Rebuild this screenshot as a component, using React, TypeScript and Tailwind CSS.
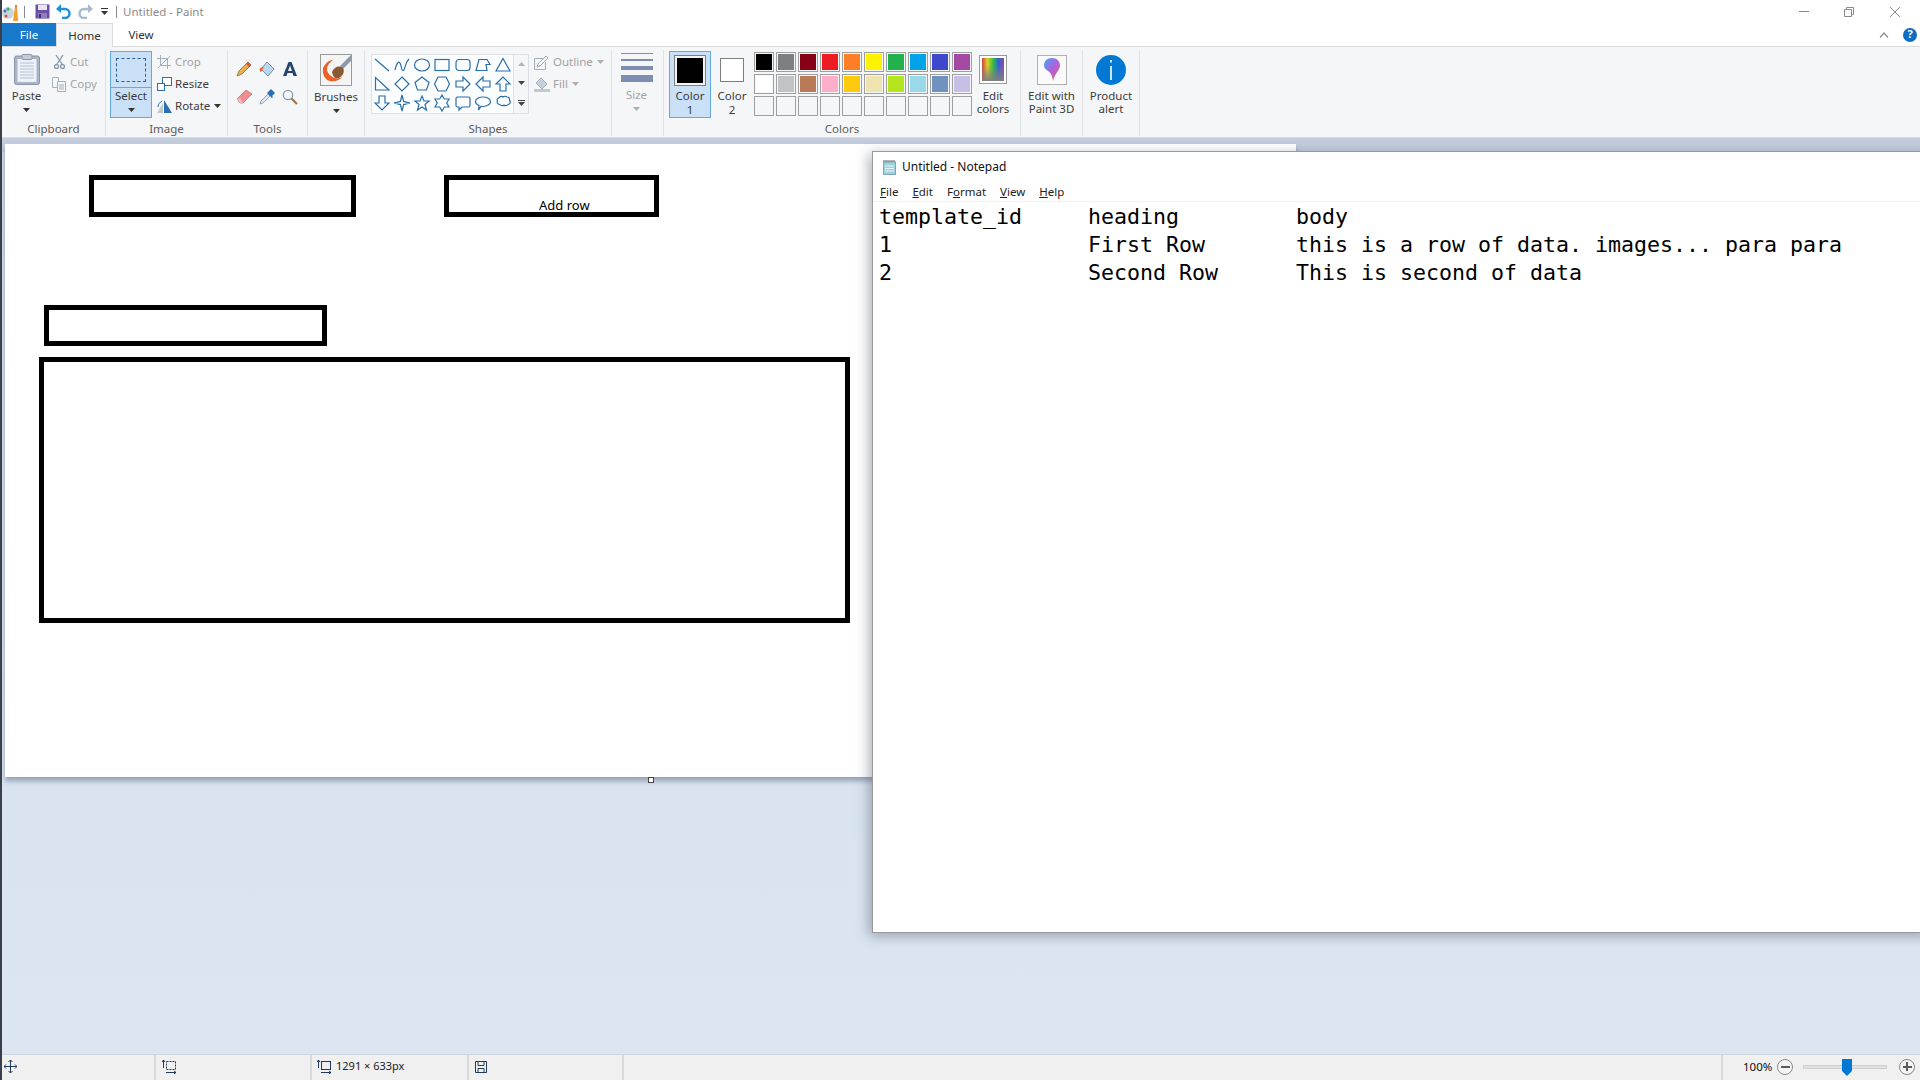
import type { ReactNode } from "react";

const sans = "font-['Noto_Sans',sans-serif]";

const paletteRow1 = ["#000000", "#7f7f7f", "#880015", "#ed1c24", "#ff7f27", "#fff200", "#22b14c", "#00a2e8", "#3f48cc", "#a349a4"];
const paletteRow2 = ["#ffffff", "#c3c3c3", "#b97a57", "#ffaec9", "#ffc90e", "#efe4b0", "#b5e61d", "#99d9ea", "#7092be", "#c8bfe7"];
const paletteRow3 = Array(10).fill("");

// shape gallery, 16x16 boxes
const shapes: ReactNode[] = [
  <path d="M1 2 15 14" />,
  <path d="M1 13C3 4 6 3 7 9s3 6 4 1 2-6 4-8" />,
  <ellipse cx="8" cy="8" rx="7.5" ry="6" />,
  <rect x="1" y="2.5" width="14" height="11" />,
  <rect x="1" y="2.5" width="14" height="11" rx="3" />,
  <path d="M4 2.5h8l3 5h-4l1 6H1z" />,
  <path d="M8 1.5 15 14H1z" />,
  <path d="M1.5 1.5V14H15z" />,
  <path d="M8 1 15 8 8 15 1 8z" />,
  <path d="M8 1 15 6.5 12.5 14h-9L1 6.5z" />,
  <path d="M4 1h8l3.5 7L12 15H4L.5 8z" />,
  <path d="M1 5h7V1l7 7-7 7v-4H1z" />,
  <path d="M15 5H8V1L1 8l7 7v-4h7z" />,
  <path d="M5 15V8H1l7-7 7 7h-4v7z" />,
  <path d="M5 1v7H1l7 7 7-7h-4V1z" />,
  <path d="M8 0l1.6 6.4L16 8l-6.400 1.600L8 16 6.400 9.600 0 8l6.400-1.600z" />,
  <path d="M8 1l2 5h5l-4 3.500 1.500 5.500L8 12l-4.500 3L5 9.500 1 6h5z" />,
  <path d="M8 0l2.300 4H15l-2.300 4L15 12h-4.700L8 16l-2.300-4H1l2.300-4L1 4h4.700z" />,
  <path d="M2.500 2h11A1.500 1.500 0 0 1 15 3.500v7a1.500 1.500 0 0 1-1.500 1.500H7l-3 3v-3H2.500A1.500 1.500 0 0 1 1 10.500v-7A1.500 1.500 0 0 1 2.500 2z" />,
  <path d="M8 2c4 0 7.500 2 7.500 4.700S12 11.500 8 11.500c-.700 0-1.300 0-2-.200L3.500 15l.500-4.500C2 9.500.500 8.200.500 6.700.500 4 4 2 8 2z" />,
  <path d="M4 3c1-2 3-2 4-1 1-1 3-1 4 0 2 0 3 2 2.500 3.500 1.500 1.500.5 4-1.500 4-1 1.500-3 1.500-4 .5-1 1-3 1-4-.5-2 0-3.500-2-2.500-3.500C1.500 4.500 2.500 3 4 3z" />,
];

function Separator() {
  return <div className="w-px h-[86px] mt-[3px] bg-[#dfe1e4]" />;
}

function RibbonGroup({ width, label, children }: { width: string; label: string; children: ReactNode }) {
  return (
    <div className={`${width} shrink-0 flex`}>
      <div className="flex-1 flex flex-col min-w-0">
        <div className="h-[75px] flex">{children}</div>
        <div className="text-center text-[11.5px] leading-[14px] text-[#5c5c5c]">{label}</div>
      </div>
      <Separator />
    </div>
  );
}

function Arrow({ muted = false }: { muted?: boolean }) {
  return (
    <svg width="7" height="4" viewBox="0 0 7 4" className="mx-auto">
      <path d="M0 0h7L3.500 4z" fill={muted ? "#b0b0b0" : "#333333"} />
    </svg>
  );
}

function SmallAction({ icon, label, muted, arrow }: { icon: ReactNode; label: string; muted?: boolean; arrow?: boolean }) {
  return (
    <div className="h-[22px] flex items-center gap-[3px]">
      <div className="w-[16px] h-[18px] flex items-center justify-center">{icon}</div>
      <span className={`text-[11.5px] ${muted ? "text-[#a3a3a3]" : "text-[#3c3c3c]"}`}>{label}</span>
      {arrow && <div className="ml-[1px]"><Arrow muted={muted} /></div>}
    </div>
  );
}

function PaintIcon() {
  return (
    <svg width="17" height="18" viewBox="0 0 17 18">
      <ellipse cx="6" cy="10" rx="6" ry="6" fill="#c9d6dc" />
      <circle cx="3" cy="8" r="1.500" fill="#2f7fd0" />
      <circle cx="6" cy="6" r="1.500" fill="#3aa655" />
      <circle cx="4" cy="13" r="1.500" fill="#d94f3a" />
      <path d="M11 18 13 4l2 0 1 14z" fill="#f0a030" />
      <path d="M13 4l1-3 1 3z" fill="#c0392b" />
    </svg>
  );
}

function SaveIcon({ color = "#6a4fa3" }: { color?: string }) {
  return (
    <svg width="15" height="15" viewBox="0 0 15 15">
      <rect x=".5" y=".5" width="14" height="14" fill={color} />
      <rect x="3" y="1" width="9" height="5" fill="#e8e4f2" />
      <rect x="3" y="9" width="9" height="5.500" fill="#8f7fbe" />
      <rect x="4" y="10" width="2" height="4" fill="#3e2f70" />
    </svg>
  );
}

function ClipboardIcon() {
  return (
    <svg width="26" height="31" viewBox="0 0 26 31">
      <rect x=".5" y="2" width="25" height="28.500" rx="2" fill="#a9b4c6" stroke="#8b97ab" />
      <rect x="3.500" y="5" width="19" height="23" fill="#eef2f8" />
      <path d="M6 9h14M6 12h14M6 15h14M6 18h14M6 21h14M6 24h14" stroke="#b4c0d2" />
      <rect x="8" y="0.500" width="10" height="5" rx="1" fill="#c5ccd8" stroke="#8b97ab" />
    </svg>
  );
}

function PaletteSwatch({ color }: { color: string }) {
  return (
    <div className="w-[20px] h-[20px] border border-[#a0a0a0] p-px">
      <div className="w-full h-full" style={{ backgroundColor: color || "transparent" }} />
    </div>
  );
}

function MoveIcon() {
  return (
    <svg width="13" height="13" viewBox="0 0 13 13" fill="none" stroke="#1f3a5a">
      <path d="M6.500 0v13M0 6.500h13M4.500 2l2-2 2 2M4.500 11l2 2 2-2M2 4.500l-2 2 2 2M11 4.500l2 2-2 2" />
    </svg>
  );
}

function SizeIcon({ dashed }: { dashed?: boolean }) {
  return (
    <svg width="14" height="14" viewBox="0 0 14 14" fill="none" stroke="#1f3a5a">
      <rect x="4.500" y="1.500" width="9" height="8" strokeDasharray={dashed ? "2 1" : undefined} />
      <path d="M1.500 8V0M0 2l1.500-2L3 2M4 12.500h10M12 11l2 1.500-2 1.500" />
    </svg>
  );
}

function ZoomButton({ plus }: { plus?: boolean }) {
  return (
    <div className="relative w-[16px] h-[16px] rounded-full border border-[#8a8a8a] bg-[#f4f4f4] flex items-center justify-center">
      <div className="w-[9px] h-[2px] bg-[#5a5a5a]" />
      {plus && <div className="absolute w-[2px] h-[9px] bg-[#5a5a5a]" />}
    </div>
  );
}

function StatusCell({ width, children }: { width: string; children?: ReactNode }) {
  return <div className={`${width} shrink-0 h-full pb-[2px] border-r-2 border-[#dadada] flex items-center`}>{children}</div>;
}

function Notepad() {
  return (
    <div className="absolute left-[870px] top-[151px] w-[1060px] h-[782px] bg-white border border-[#9a9a9a] shadow-[-3px_3px_12px_rgba(70,80,100,0.45)] flex flex-col">
      <div className="h-[30px] flex items-center pl-[9px] gap-[5px]">
        <svg width="15" height="15" viewBox="0 0 15 15">
          <rect x="1.500" y="2" width="12" height="12.500" fill="#9fd0dc" stroke="#7aa8b8" />
          <path d="M3 6h9M3 8.500h9M3 11h9" stroke="#eaf6fa" />
          <path d="M2 2V0M4 2V0M6 2V0M8 2V0M10 2V0M12 2V0" stroke="#666666" />
        </svg>
        <span className={`${sans} text-[12px] text-[#111111]`}>Untitled - Notepad</span>
      </div>
      <div className={`${sans} h-[18px] mt-[1px] flex items-center pl-[7px] gap-[14px] text-[11.5px] text-[#222222]`}>
        <span><u>F</u>ile</span>
        <span><u>E</u>dit</span>
        <span>F<u>o</u>rmat</span>
        <span><u>V</u>iew</span>
        <span><u>H</u>elp</span>
      </div>
      <div className="h-px bg-[#f0f0f0]" />
      <div className="font-['DejaVu_Sans_Mono',monospace] text-[21.6px] leading-[28px] text-black pl-[6px] pt-[1px]">
        <div className="grid grid-cols-[209px_208px_1fr] whitespace-pre">
          <span>template_id</span><span>heading</span><span>body</span>
          <span>1</span><span>First Row</span><span>this is a row of data. images... para para</span>
          <span>2</span><span>Second Row</span><span>This is second of data</span>
        </div>
      </div>
    </div>
  );
}

export default function App() {
  return (
    <div className={`${sans} relative w-[1920px] h-[1080px] overflow-hidden bg-white flex flex-col border-l-2 border-[#3a3f4a]`}>
      {/* title bar */}
      <div className="h-[23px] shrink-0 flex items-center">
        <PaintIcon />
        <div className="w-px h-[12px] bg-[#888888] ml-[5px]" />
        <div className="ml-[10px]"><SaveIcon /></div>
        <svg width="15" height="15" viewBox="0 0 15 15" className="ml-[6px]" fill="none">
          <path d="M2 5h7a4 4 0 0 1 0 9H6" stroke="#1c8fe0" strokeWidth="2.500" />
          <path d="M0 5 5 0v9z" fill="#1c8fe0" />
        </svg>
        <svg width="15" height="15" viewBox="0 0 15 15" className="ml-[7px]" fill="none">
          <path d="M13 5H6a4 4 0 0 0 0 9h3" stroke="#a9bacb" strokeWidth="2.500" />
          <path d="M15 5 10 0v9z" fill="#a9bacb" />
        </svg>
        <svg width="7" height="7" viewBox="0 0 7 7" className="ml-[8px]">
          <path d="M0 0h7v1H0zM0 3h7L3.500 7z" fill="#333333" />
        </svg>
        <div className="w-px h-[12px] bg-[#888888] ml-[8px]" />
        <span className="ml-[6px] text-[11.5px] text-[#8a8a8a]">Untitled - Paint</span>
        <div className="ml-auto flex items-center">
          <div className="w-[10px] h-px bg-[#8a8a8a]" />
          <svg width="10" height="10" viewBox="0 0 10 10" fill="none" stroke="#8a8a8a" className="ml-[35px]">
            <path d="M.5 2.500h7v7h-7zM2.500 2.500v-2h7v7h-2" />
          </svg>
          <svg width="12" height="12" viewBox="0 0 12 12" fill="none" stroke="#8a8a8a" className="ml-[35px] mr-[19px]">
            <path d="M1 1l10 10M11 1 1 11" />
          </svg>
        </div>
      </div>

      {/* tabs */}
      <div className="h-[23px] shrink-0 flex items-end text-[11.5px]">
        <div className="w-[54px] h-[23px] bg-[#1979ca] text-white flex items-center justify-center">File</div>
        <div className="w-[57px] h-[24px] -mb-px z-10 bg-[#f5f6f7] border-x border-t border-[#dadbdc] text-[#333333] flex items-center justify-center">Home</div>
        <div className="w-[56px] h-[23px] text-[#333333] flex items-center justify-center">View</div>
        <div className="ml-auto flex items-center gap-[14px] h-[23px] pr-[3px]">
          <svg width="10" height="6" viewBox="0 0 10 6" fill="none" stroke="#8a8a8a" strokeWidth="1.200">
            <path d="M1 5.500 5 1l4 4.500" />
          </svg>
          <div className="w-[14px] h-[14px] rounded-full bg-[#0f6cc4] text-white text-[11px] font-bold flex items-center justify-center">?</div>
        </div>
      </div>

      {/* ribbon */}
      <div className="h-[92px] shrink-0 bg-[#f5f6f7] border-y border-[#dadbdc] flex text-[11.5px] text-[#3c3c3c] leading-[14px]">
        <RibbonGroup width="w-[104px]" label="Clipboard">
          <div className="w-[49px] pt-[7px] flex flex-col items-center">
            <ClipboardIcon />
            <span className="mt-[4px]">Paste</span>
            <div className="mt-[5px]"><Arrow /></div>
          </div>
          <div className="pt-[4px]">
            <SmallAction
              muted
              label="Cut"
              icon={<svg width="11" height="14" viewBox="0 0 11 14" fill="none" stroke="#8a98ab" strokeWidth="1.300"><path d="M2 0l6 9M9 0 3 9" /><circle cx="2.500" cy="11.500" r="2" /><circle cx="8.500" cy="11.500" r="2" /></svg>}
            />
            <SmallAction
              muted
              label="Copy"
              icon={<svg width="14" height="15" viewBox="0 0 14 15" fill="#f4f6f8" stroke="#a5b0bf"><path d="M.5.500h6v10h-6z" /><path d="M5.500 4.500h8v10h-8z" /><path d="M7 8h5M7 10h5M7 12h5" /></svg>}
            />
          </div>
        </RibbonGroup>

        <RibbonGroup width="w-[122px]" label="Image">
          <div className="ml-[4px] mt-[4px] w-[42px] h-[67px] bg-[#c9e0f7] border border-[#64a8e8] flex flex-col items-center">
            <div className="h-[36px] w-full border-b border-[#64a8e8] flex items-center justify-center">
              <div className="w-[30px] h-[24px] border border-dashed border-[#2b5f95]" />
            </div>
            <span className="mt-[1px]">Select</span>
            <div className="mt-[5px]"><Arrow /></div>
          </div>
          <div className="ml-[4px] pt-[4px]">
            <SmallAction
              muted
              label="Crop"
              icon={<svg width="14" height="14" viewBox="0 0 14 14" fill="none" stroke="#a5b0bf"><path d="M3.500 0v10.500H14M0 3.500h10.500V14M1 13 13 1" /></svg>}
            />
            <SmallAction
              label="Resize"
              icon={<svg width="15" height="14" viewBox="0 0 15 14" fill="#ffffff" stroke="#2a6fb5"><rect x="5.500" y=".5" width="9" height="8" /><rect x=".5" y="6.500" width="7" height="7" /></svg>}
            />
            <SmallAction
              arrow
              label="Rotate"
              icon={<svg width="16" height="14" viewBox="0 0 16 14"><path d="M1 14 7 4v10z" fill="#c2c8d0" /><path d="M8 1v13h8z" fill="#2a6fb5" /><path d="M2 8C2 5 4 3 6 2" fill="none" stroke="#2a6fb5" /></svg>}
            />
          </div>
        </RibbonGroup>

        <RibbonGroup width="w-[80px]" label="Tools">
          <div className="ml-[8px] mt-[14px] grid grid-cols-[repeat(3,16px)] gap-x-[7px] gap-y-[9px] h-[46px]">
            <svg width="16" height="16" viewBox="0 0 16 16"><path d="M1 15 3 10 12 1l3 3-9 9z" fill="#e8b04a" stroke="#7a5a20" strokeWidth=".7" /><path d="M12 1l3 3-2 2-3-3z" fill="#d9534f" /></svg>
            <svg width="16" height="16" viewBox="0 0 16 16"><path d="M8 1l7 7-6 7-7-7z" fill="#bcd7ee" stroke="#6c8fb0" /><path d="M1 7C0 9 1 11 2 11l3-5z" fill="#e8662a" /></svg>
            <svg width="16" height="16" viewBox="0 0 16 16"><path d="M6.500 1h3L15 15h-3.500l-1-3h-5l-1 3H1zM6 10h4L8 4.500z" fill="#25456e" fillRule="evenodd" /></svg>
            <svg width="17" height="15" viewBox="0 0 17 15"><path d="M1 10 10 1l6 4-9 9H4z" fill="#ee8e8e" stroke="#c46a6a" strokeWidth=".7" /><path d="M1 10l3 4h3l-3-5z" fill="#f5bcbc" /></svg>
            <svg width="16" height="16" viewBox="0 0 16 16"><path d="M1 15l1-3 7-7 2 2-7 7z" fill="#dbe7f2" stroke="#7a8a9a" strokeWidth=".7" /><path d="M9 3l3-3 4 4-3 3 1 1-1 1-5-5 1-1z" fill="#2a6fb5" /></svg>
            <svg width="16" height="16" viewBox="0 0 16 16" fill="none"><circle cx="6" cy="6" r="4.700" fill="#eef4fa" stroke="#8f9aa8" strokeWidth="1.300" /><path d="M9.500 9.500 15 15" stroke="#9a7a4a" strokeWidth="2.200" /></svg>
          </div>
        </RibbonGroup>

        <RibbonGroup width="w-[57px]" label="">
          <div className="w-full pt-[7px] flex flex-col items-center">
            <svg width="32" height="32" viewBox="0 0 32 32">
              <rect x=".5" y=".5" width="31" height="31" fill="#f4f4f4" stroke="#9a9a9a" />
              <path d="M3 14C6 8 10 6 13 6 9 9 7 12 7 15c0 4 4 8 8 9 3 1 5 0 7-1-3 4-8 5-12 4C5 26 2 20 3 14z" fill="#e8622a" />
              <path d="M31 1 20 12l3 3 8-8z" fill="#8d99a8" />
              <path d="M12 18c2-5 7-7 11-4 2 3 0 8-4 10-3 1-6 0-7-6z" fill="#8b5a33" />
            </svg>
            <span className="mt-[4px]">Brushes</span>
            <div className="mt-[5px]"><Arrow /></div>
          </div>
        </RibbonGroup>

        <RibbonGroup width="w-[247px]" label="Shapes">
          <div className="ml-[6px] mt-[7px] w-[158px] h-[60px] bg-[#fbfdfe] border border-[#dcdfe3] flex">
            <div className="w-[141px] grid grid-cols-7 grid-rows-3 place-items-center">
              {shapes.map((shape, i) => (
                <svg key={i} width="16" height="16" viewBox="0 0 16 16" fill="none" stroke="#2a6fa8" strokeWidth="1.200" className="overflow-visible">
                  {shape}
                </svg>
              ))}
            </div>
            <div className="flex-1 border-l border-[#dcdfe3] flex flex-col items-center justify-around bg-[#f5f6f7]">
              <svg width="7" height="4" viewBox="0 0 7 4"><path d="M0 4h7L3.500 0z" fill="#b5b5b5" /></svg>
              <svg width="7" height="4" viewBox="0 0 7 4"><path d="M0 0h7L3.500 4z" fill="#444444" /></svg>
              <svg width="7" height="6" viewBox="0 0 7 6"><path d="M0 0h7v1H0zM0 2h7L3.500 6z" fill="#444444" /></svg>
            </div>
          </div>
          <div className="ml-[5px] pt-[4px]">
            <SmallAction
              muted
              arrow
              label="Outline"
              icon={<svg width="16" height="15" viewBox="0 0 16 15" fill="none" stroke="#a5b0bf"><path d="M.5 3.500h9M.5 3.500v11h11V7" /><path d="M3 12l1-3 8-8 2 2-8 8z" fill="#f4f6f8" /></svg>}
            />
            <SmallAction
              muted
              arrow
              label="Fill"
              icon={<svg width="16" height="15" viewBox="0 0 16 15"><path d="M7 1l6 6-5 5-6-6z" fill="#c7d0da" stroke="#a5b0bf" /><rect x="0" y="12" width="16" height="3" fill="#c2c8d0" /></svg>}
            />
          </div>
        </RibbonGroup>

        <RibbonGroup width="w-[52px]" label="">
          <div className="w-full pt-[6px] pr-[2px] flex flex-col items-center text-[#a3a3a3]">
            <div className="w-[32px] flex flex-col gap-[5px]">
              <div className="h-px bg-[#7d8eb0]" />
              <div className="h-[2px] bg-[#7d8eb0]" />
              <div className="h-[4px] bg-[#7d8eb0]" />
              <div className="h-[7px] bg-[#7d8eb0]" />
            </div>
            <span className="mt-[6px]">Size</span>
            <div className="mt-[5px]"><Arrow muted /></div>
          </div>
        </RibbonGroup>

        <RibbonGroup width="w-[357px]" label="Colors">
          <div className="ml-[5px] mt-[4px] w-[42px] h-[67px] bg-[#c9e0f7] border border-[#64a8e8] flex flex-col items-center pt-[3px]">
            <div className="w-[32px] h-[32px] border border-[#7f7f7f] p-[2px] bg-[#f4f4f4]">
              <div className="w-full h-full bg-black" />
            </div>
            <span className="mt-[3px] text-center">Color<br />1</span>
          </div>
          <div className="w-[42px] flex flex-col items-center pt-[11px]">
            <div className="w-[24px] h-[24px] border border-[#7f7f7f] bg-white" />
            <span className="mt-[7px] text-center">Color<br />2</span>
          </div>
          <div className="ml-[1px] mt-[5px] grid grid-cols-[repeat(10,20px)] gap-[2px] h-[64px]">
            {[...paletteRow1, ...paletteRow2, ...paletteRow3].map((color, i) => (
              <PaletteSwatch key={i} color={color} />
            ))}
          </div>
          <div className="flex-1 pr-[6px] flex flex-col items-center pt-[8px]">
            <div className="w-[28px] h-[29px] shrink-0 border border-[#9a9a9a] p-[2px] bg-white">
              <div className="w-full h-full bg-[linear-gradient(180deg,transparent_30%,#808080),linear-gradient(90deg,#d04040,#e0d020,#30c040,#3060d0,#a040a0)]" />
            </div>
            <span className="mt-[5px] text-center leading-[13px]">Edit<br />colors</span>
          </div>
        </RibbonGroup>

        <RibbonGroup width="w-[62px]" label="">
          <div className="w-full flex flex-col items-center pt-[8px]">
            <div className="w-[30px] h-[30px] border border-[#b0b0b0] bg-[#fafafa] flex items-center justify-center">
              <svg width="18" height="26" viewBox="0 0 18 26">
                <defs>
                  <linearGradient id="drop" x1="0" y1="0" x2="1" y2="1">
                    <stop offset="0" stopColor="#3fa8f0" />
                    <stop offset=".5" stopColor="#b060e0" />
                    <stop offset="1" stopColor="#f06060" />
                  </linearGradient>
                </defs>
                <path d="M9 1c5 0 8 3.500 8 7.500 0 5-5 7-7 15.500-1-6-2-8-5-10C2 12 1 10.500 1 8.500 1 4.500 4 1 9 1z" fill="url(#drop)" />
              </svg>
            </div>
            <span className="mt-[4px] text-center leading-[13px] whitespace-nowrap">Edit with<br />Paint 3D</span>
          </div>
        </RibbonGroup>

        <RibbonGroup width="w-[57px]" label="">
          <div className="w-full flex flex-col items-center pt-[8px]">
            <div className="w-[30px] h-[30px] rounded-full bg-[#0078d4] flex items-center justify-center">
              <svg width="4" height="20" viewBox="0 0 4 20"><path d="M1.200 0h1.600v2.500H1.200zM1.200 6h1.600v14H1.200z" fill="#ffffff" /></svg>
            </div>
            <span className="mt-[4px] text-center leading-[13px]">Product<br />alert</span>
          </div>
        </RibbonGroup>
      </div>

      {/* canvas area */}
      <div className="flex-1 relative bg-[linear-gradient(180deg,#c3cddd_0,#c3cddd_14px,#d3deeb_14px,#dce6f2_100%)]">
        <div className="h-[6px]" />
        <div className="relative ml-[3px] w-[1291px] h-[633px] bg-white shadow-[0_4px_5px_rgba(90,105,135,0.55)]">
          {/* strokes drawn on the paint canvas */}
          <div className="absolute left-[84px] top-[31px] w-[267px] h-[42px] border-[5px] border-black" />
          <div className="absolute left-[439px] top-[31px] w-[215px] h-[42px] border-[5px] border-black" />
          <span className="absolute left-[534px] top-[52px] text-[13px] leading-[18px] text-black whitespace-nowrap">Add row</span>
          <div className="absolute left-[39px] top-[161px] w-[283px] h-[41px] border-[5px] border-black" />
          <div className="absolute left-[34px] top-[213px] w-[811px] h-[266px] border-[5px] border-black" />
          <div className="absolute left-[643px] top-[633px] w-[6px] h-[6px] bg-white border border-[#444444]" />
        </div>
      </div>

      {/* status bar */}
      <div className="h-[26px] shrink-0 bg-[#f0f0f0] border-t border-[#d0d6de] flex items-center text-[11.5px] text-[#222222]">
        <StatusCell width="w-[154px]"><div className="ml-[2px] flex"><MoveIcon /></div></StatusCell>
        <StatusCell width="w-[156px]"><div className="ml-[6px] flex"><SizeIcon dashed /></div></StatusCell>
        <StatusCell width="w-[157px]">
          <div className="ml-[5px] flex items-center gap-[5px]">
            <SizeIcon />
            <span className="whitespace-nowrap text-[11px]">1291 × 633px</span>
          </div>
        </StatusCell>
        <StatusCell width="w-[155px]">
          <svg width="12" height="12" viewBox="0 0 12 12" fill="none" stroke="#1f3a5a" className="ml-[6px]">
            <path d="M.5.500h11v11H.5zM3 .5v4h6v-4M3 11.500V7.500h6v4" />
          </svg>
        </StatusCell>
        <div className="ml-[1097px] h-full pb-[2px] border-l-2 border-[#dadada] flex items-center">
          <span className="ml-[20px] w-[34px] text-[#111111]">100%</span>
          <div><ZoomButton /></div>
          <div className="relative ml-[10px] w-[84px] h-[4px] bg-[#e2e2e2] border border-[#d0d0d0] flex items-center">
            <svg width="10" height="17" viewBox="0 0 10 17" className="absolute left-[38px] -top-[7px]">
              <path d="M0 0h10v12l-5 5-5-5z" fill="#0078d4" />
            </svg>
          </div>
          <div className="ml-[12px]"><ZoomButton plus /></div>
        </div>
      </div>

      <Notepad />
    </div>
  );
}
